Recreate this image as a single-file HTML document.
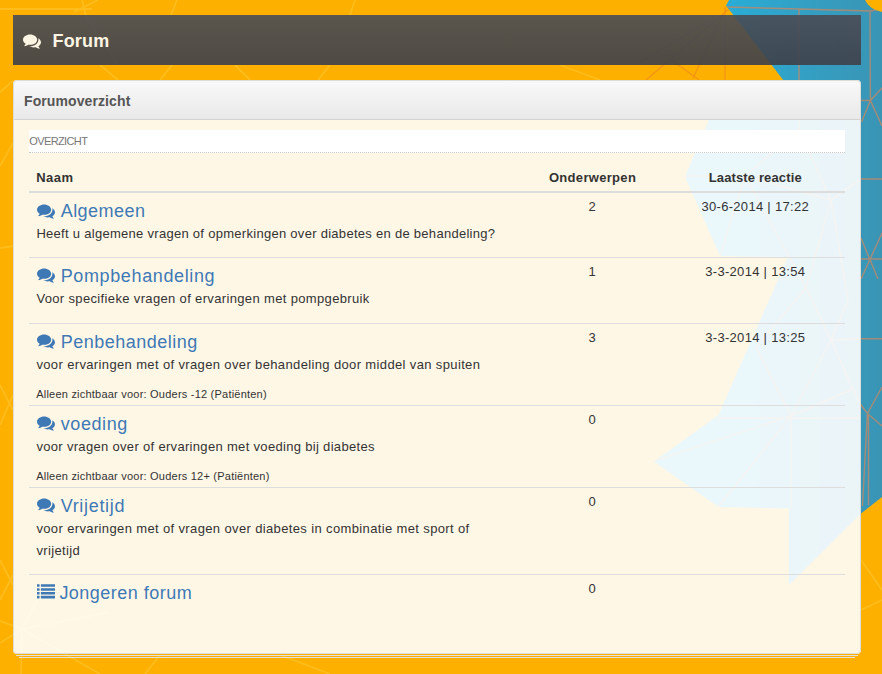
<!DOCTYPE html>
<html lang="nl">
<head>
<meta charset="utf-8">
<title>Forum</title>
<style>
html,body{margin:0;padding:0;}
body{width:882px;height:674px;overflow:hidden;position:relative;background:#fdb000;
  font-family:"Liberation Sans",sans-serif;font-size:13px;color:#333;}
#bg{position:absolute;left:0;top:0;width:882px;height:674px;display:block;}
#pagehead{position:absolute;left:13px;top:15px;width:848px;height:50px;
  background:linear-gradient(to bottom,rgba(74,77,86,.91),rgba(61,64,73,.91));color:#fdf5e4;}
#pagehead h1{margin:0;position:absolute;left:10px;top:13px;height:26px;line-height:26px;font-size:18px;font-weight:bold;white-space:nowrap;}
#pagehead h1 .t{position:absolute;left:29.5px;top:0;letter-spacing:.19px;}
.fa{display:inline-block;width:1em;height:1em;vertical-align:-0.1429em;fill:currentColor;overflow:visible;}
#panel{position:absolute;left:13px;top:80px;width:848px;height:574px;border-radius:4px;}
#panel .heading{position:absolute;left:0;top:0;width:848px;height:39px;border-bottom:1px solid #d4d4d4;border-radius:4px 4px 0 0;
  background:linear-gradient(to bottom,#f9f9f9,#e9e9e9);}
#panel .heading h2{margin:0;position:absolute;left:11px;top:11px;font-size:14px;line-height:20px;font-weight:bold;color:#555;letter-spacing:.1px;white-space:nowrap;}
#panel .body{position:absolute;left:0;top:40px;width:848px;height:534px;background:rgba(255,255,255,.9);border-radius:0 0 4px 4px;}
.crumb{position:absolute;left:16px;top:10px;width:816px;height:22px;background:#fff;border-bottom:1px dotted #c8c8c8;}
.crumb span{position:absolute;left:.3px;top:0;line-height:22px;font-size:11px;color:#777;letter-spacing:-.62px;white-space:nowrap;}
table{position:absolute;left:16px;top:36px;width:816px;border-collapse:collapse;table-layout:fixed;}
th,td{padding:0;vertical-align:top;text-align:center;font-weight:normal;white-space:nowrap;}
th{height:35px;border-bottom:2px solid #ddd;font-weight:bold;line-height:18px;padding-top:0;color:#333;}
th div{padding-top:13px;}
th.n,td.n{text-align:left;padding-left:8px;}
td{border-top:1px solid #ddd;}
tr.first td{border-top:0;}
td .num{padding-top:4px;line-height:19px;}
td h3{margin:0;padding-top:6px;font-size:18px;font-weight:normal;line-height:24px;color:#3e79b6;}
td h3 .fa{margin-right:5.7px;}
td p{margin:0 0 0 -.6px;line-height:22px;}
td small{display:block;font-size:11px;line-height:16px;padding-top:10px;margin-left:-.8px;}
#panel .frame{position:absolute;left:0;top:0;width:846px;height:572px;border:1px solid #dcdcd8;border-radius:4px;}
.stack1,.stack2{position:absolute;height:1px;background:#e2e2dc;}
</style>
</head>
<body>
<svg id="bg" viewBox="0 0 882 674">
  <defs>
    <linearGradient id="bl" gradientUnits="userSpaceOnUse" x1="722" y1="0" x2="880" y2="0">
      <stop offset="0" stop-color="#28aed8"/>
      <stop offset="0.5" stop-color="#33a0c4"/>
      <stop offset="1" stop-color="#3a95b5"/>
    </linearGradient>
    <symbol id="i-comments" viewBox="0 -1536 1792 1792"><path transform="scale(1,-1)" d="M1408 768C1408 1051 1093 1280 704 1280C315 1280 0 1051 0 768C0 606 104 461 266 367C232 284 188 245 149 201C138 188 125 176 129 157C132 140 146 128 161 128C162 128 163 128 164 128C194 132 223 137 250 144C351 170 445 213 528 272C584 262 643 256 704 256C1093 256 1408 485 1408 768ZM1792 512C1792 679 1682 827 1513 920C1528 871 1536 820 1536 768C1536 589 1444 424 1277 302C1122 190 919 128 704 128C675 128 645 130 616 132C741 50 907 0 1088 0C1149 0 1208 6 1264 16C1347 -43 1441 -86 1542 -112C1569 -119 1598 -124 1628 -128C1644 -130 1659 -117 1663 -99C1667 -80 1654 -68 1643 -55C1604 -11 1560 28 1526 111C1688 205 1792 349 1792 512Z"/></symbol>
    <symbol id="i-list" viewBox="0 -1536 1792 1792"><path transform="scale(1,-1)" d="M256 224C256 241 241 256 224 256H32C15 256 0 241 0 224V32C0 15 15 0 32 0H224C241 0 256 15 256 32ZM256 608C256 625 241 640 224 640H32C15 640 0 625 0 608V416C0 399 15 384 32 384H224C241 384 256 399 256 416ZM256 992C256 1009 241 1024 224 1024H32C15 1024 0 1009 0 992V800C0 783 15 768 32 768H224C241 768 256 783 256 800ZM1792 224C1792 241 1777 256 1760 256H416C399 256 384 241 384 224V32C384 15 399 0 416 0H1760C1777 0 1792 15 1792 32ZM256 1376C256 1393 241 1408 224 1408H32C15 1408 0 1393 0 1376V1184C0 1167 15 1152 32 1152H224C241 1152 256 1167 256 1184ZM1792 608C1792 625 1777 640 1760 640H416C399 640 384 625 384 608V416C384 399 399 384 416 384H1760C1777 384 1792 399 1792 416ZM1792 992C1792 1009 1777 1024 1760 1024H416C399 1024 384 1009 384 992V800C384 783 399 768 416 768H1760C1777 768 1792 783 1792 800ZM1792 1376C1792 1393 1777 1408 1760 1408H416C399 1408 384 1393 384 1376V1184C384 1167 399 1152 416 1152H1760C1777 1152 1792 1167 1792 1184Z"/></symbol>
  </defs>
  <rect width="882" height="674" fill="#fdb000"/>
  <g fill="none" stroke="#ffd24a" stroke-opacity=".38" stroke-width="1.8">
    <path d="M0,9 L92,9 M74,12 L98,0 M82,0 L86,16 L118,65 M177,0 L171,15 M355,0 L350,15"/>
    <path d="M0,92 L13,81 M0,166 L13,143 M0,248 L13,246 M0,385 L13,410 M0,425 L13,395 M0,560 L13,585 M0,600 L13,575"/>
    <path d="M22,629 L0,621 M22,629 L0,643 M22,629 L21,674 M22,629 L100,674 M22,629 L40,595 M22,629 L110,612 M160,655 L145,674 M280,655 L330,674"/>
    <path d="M100,65 L118,80 M172,65 L160,80 M235,65 L250,80 M330,65 L318,80 M560,65 L600,80 M861,560 L882,590 M861,610 L882,600"/>
  </g>
  <g fill="none" stroke="#f08a1c" stroke-opacity=".7" stroke-width="1.3">
    <path d="M729,9 L646,80 M726,9 L693,78 M725,7 L725,80 M662,53 L699,80 M640,62 L712,20"/>
  </g>
  <polygon fill="url(#bl)" points="729,0 726,5.5 792,91.5 722,92 709,120 685,176.5 720,256 788,257 718.5,415 654,461.5 718.5,507 789,508.5 789,585 861,513.5 882,497 882,0"/>
  <clipPath id="cp"><polygon points="729,0 726,5.5 792,91.5 722,92 709,120 685,176.5 720,256 788,257 718.5,415 654,461.5 718.5,507 789,508.5 789,585 861,513.5 882,497 882,0"/></clipPath>
  <g clip-path="url(#cp)" fill="none" stroke="#b98a6c" stroke-opacity=".85" stroke-width="1.4">
    <path d="M726,7 L799,9 L870,11 L882,9 M799,9 L799,130 M870,11 L870.4,100.5 M861,100.5 L870.4,100.5 L882,88 M861.5,122 L870.4,100.5 L882,126"/>
    <path d="M861,179 L882,179 M861,238 L878,279 M882,233 L861,279 M861,259 L882,259 M861,338.7 L882,338.7"/>
    <path d="M861,405 L867.4,413.5 L882,387 M867.4,413.5 L882,426 M867.4,413.5 L862.5,506 M868.5,414 L868.5,505"/>
    <path d="M799,130 L745,176 L685,176 M799,130 L831,200 L861,179 M745,176 L831,200 L806,288 L745,176 M745,176 L720,256 M806,288 L831,340 L861,339 M831,200 L848,300 L831,340 M831,340 L791,416 L756,347 L806,288 M831,340 L853,389 L861,405 M717,418 L861,418 M791,416 L791,508 M853,389 L791,416 M718,507 L791,416 L654,461"/>
  </g>
  <path d="M865,0 Q869,9 882,12 L882,0 Z" fill="#fdb000"/>
</svg>

<div id="pagehead"><h1><svg class="fa"><use href="#i-comments"/></svg><span class="t">Forum</span></h1></div>

<div id="panel">
  <div class="heading"><h2>Forumoverzicht</h2></div>
  <div class="body">
    <div class="crumb"><span>OVERZICHT</span></div>
    <table>
      <colgroup><col style="width:489.6px"><col style="width:146.9px"><col style="width:179.5px"></colgroup>
      <thead><tr><th class="n"><div style="letter-spacing:.5px;margin-left:-.8px">Naam</div></th><th><div style="letter-spacing:.31px;padding-left:1px">Onderwerpen</div></th><th><div style="letter-spacing:.13px">Laatste reactie</div></th></tr></thead>
      <tbody>
        <tr class="first" style="height:65px"><td class="n"><h3><svg class="fa"><use href="#i-comments"/></svg><span style="letter-spacing:.45px">Algemeen</span></h3><p style="letter-spacing:.285px">Heeft u algemene vragen of opmerkingen over diabetes en de behandeling?</p></td><td><div class="num">2</div></td><td><div class="num" style="letter-spacing:.3px">30-6-2014 | 17:22</div></td></tr>
        <tr style="height:66px"><td class="n"><h3><svg class="fa"><use href="#i-comments"/></svg><span style="letter-spacing:.63px">Pompbehandeling</span></h3><p style="letter-spacing:.35px">Voor specifieke vragen of ervaringen met pompgebruik</p></td><td><div class="num">1</div></td><td><div class="num" style="letter-spacing:.3px">3-3-2014 | 13:54</div></td></tr>
        <tr style="height:82px"><td class="n"><h3><svg class="fa"><use href="#i-comments"/></svg><span style="letter-spacing:.5px">Penbehandeling</span></h3><p style="letter-spacing:.364px">voor ervaringen met of vragen over behandeling door middel van spuiten</p><small style="letter-spacing:.22px">Alleen zichtbaar voor: Ouders -12 (Patiënten)</small></td><td><div class="num">3</div></td><td><div class="num" style="letter-spacing:.3px">3-3-2014 | 13:25</div></td></tr>
        <tr style="height:82px"><td class="n"><h3><svg class="fa"><use href="#i-comments"/></svg><span style="letter-spacing:.6px">voeding</span></h3><p style="letter-spacing:.319px">voor vragen over of ervaringen met voeding bij diabetes</p><small style="letter-spacing:.22px">Alleen zichtbaar voor: Ouders 12+ (Patiënten)</small></td><td><div class="num">0</div></td><td></td></tr>
        <tr style="height:87px"><td class="n"><h3><svg class="fa"><use href="#i-comments"/></svg><span style="letter-spacing:.67px">Vrijetijd</span></h3><p style="letter-spacing:.366px">voor ervaringen met of vragen over diabetes in combinatie met sport of<br>vrijetijd</p></td><td><div class="num">0</div></td><td></td></tr>
        <tr style="height:60px"><td class="n"><h3><svg class="fa" style="margin-right:4.4px"><use href="#i-list"/></svg><span style="letter-spacing:.48px">Jongeren forum</span></h3></td><td><div class="num">0</div></td><td></td></tr>
      </tbody>
    </table>
  </div>
  <div class="frame"></div>
</div>
<div class="stack1" style="left:16px;top:655px;width:842px"></div>
<div class="stack2" style="left:19px;top:657px;width:836px"></div>
</body>
</html>
